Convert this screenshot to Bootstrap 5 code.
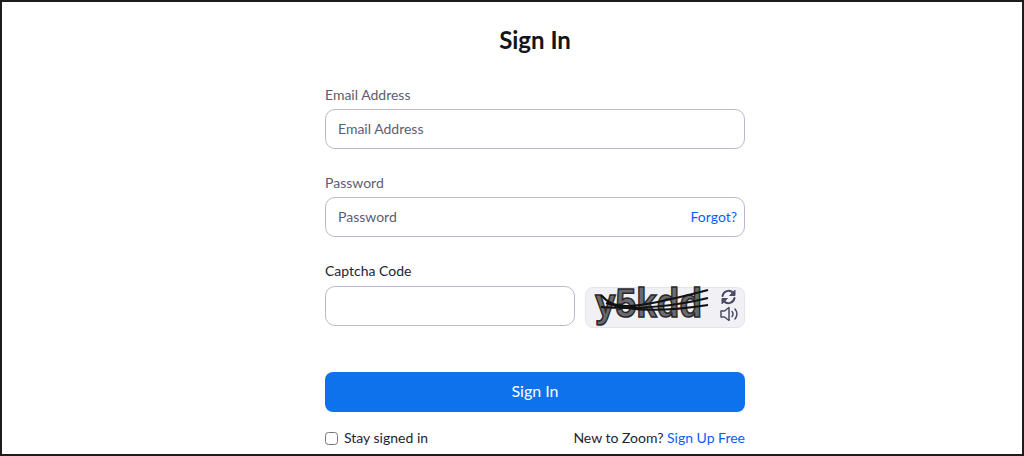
<!DOCTYPE html>
<html lang="en">
<head>
<meta charset="utf-8">
<title>Sign In</title>
<link href="https://cdn.jsdelivr.net/npm/bootstrap@5.3.0/dist/css/bootstrap.min.css" rel="stylesheet">
<style>
html,body{height:100%;}
body{font-family:Lato,"Liberation Sans",sans-serif;background:#fff;color:#232333;overflow:hidden;}
.frame{height:456px;border:2px solid #1c1c1c;box-sizing:border-box;overflow:hidden;}
.signbox{width:420px;margin-left:323px;}
.ttl{font-size:24px;font-weight:700;line-height:32px;margin:22px 0 29px;color:#131619;text-align:center;}
.lbl{display:block;font-size:14px;line-height:20px;margin:0 0 4px;color:#5d5c75;}
.lbl.dark{color:#232333;margin-bottom:5px;}
.fld{height:40px;border:1px solid #bab9d1;border-radius:10px;font-size:14px;color:#4a4a65;padding:0 12px 2px;box-shadow:none;}
.fld::placeholder{color:#5d5c75;opacity:1;}
.fwrap{margin-bottom:24px;}
.forgot{top:0;right:0;height:38px;display:flex;align-items:center;padding-right:8px;font-size:14px;color:#0b5cff;text-decoration:none;}
.capbox{width:160px;height:41px;margin-top:1px;background:#f1f1f5;border:1px solid #e4e4ed;border-radius:8px;margin-left:10px;flex:none;}
.capbox svg{overflow:visible;display:block;}
.go{height:40px;margin-top:44px;background:#0e72ed;border:none;border-radius:8px;font-size:16px;color:#fff;padding:0 0 2px;}
.go:hover{background:#0e72ed;color:#fff;}
.foot{font-size:14px;line-height:20px;margin-top:16px;}
.foot a{color:#0b5cff;text-decoration:none;}
.foot label{margin:0;}
.chk{width:13px;height:13px;border:1px solid #767676;border-radius:2px;margin:0 6px 0 0;box-shadow:none;}
</style>
</head>
<body class="m-0">
<div class="frame">
  <div class="signbox">
    <h1 class="ttl">Sign In</h1>
    <div class="fwrap">
      <label class="lbl" for="em">Email Address</label>
      <input id="em" class="form-control fld" type="text" placeholder="Email Address">
    </div>
    <div class="fwrap">
      <label class="lbl" for="pw">Password</label>
      <div class="position-relative">
        <input id="pw" class="form-control fld" type="text" placeholder="Password">
        <a class="forgot position-absolute" href="#">Forgot?</a>
      </div>
    </div>
    <label class="lbl dark" for="cc">Captcha Code</label>
    <div class="d-flex align-items-start">
      <input id="cc" class="form-control fld" type="text">
      <div class="capbox">
        <svg width="158" height="39" viewBox="0 0 158 39" aria-label="captcha">
          <text x="9" y="29" font-family="Liberation Sans" font-weight="700" font-size="40" textLength="107" lengthAdjust="spacingAndGlyphs" fill="#6a6a70" stroke="#29292c" stroke-width="1.500">y5kdd</text>
          <path d="M15 7C28 22 42 23 122 2M15 19C50 22 90 18 122 10M20 15C50 26 90 22 122 17" fill="none" stroke="#111" stroke-width="2"/>
          <g fill="none" stroke="#4a4a65" stroke-width="2" stroke-linecap="round" stroke-linejoin="round">
            <path d="M136.500 8a6.200 6.200 0 0 1 10.500-3.300"/>
            <path d="M148.500 10a6.200 6.200 0 0 1-10.500 3.300"/>
            <path d="M149 2.500v5h-5z" fill="#4a4a65" stroke-width="1"/>
            <path d="M136 15.500v-5h5z" fill="#4a4a65" stroke-width="1"/>
          </g>
          <g fill="none" stroke="#4a4a65" stroke-width="1.500" stroke-linecap="round" stroke-linejoin="round">
            <path d="M135 23h3.500l4.500-3.500v13l-4.500-3.500h-3.500z"/>
            <path d="M146 23.500a3.500 3.500 0 0 1 0 5M149 21a7.500 7.500 0 0 1 0 10"/>
          </g>
        </svg>
      </div>
    </div>
    <button class="btn go w-100 d-block" type="button">Sign In</button>
    <div class="foot d-flex justify-content-between align-items-center">
      <label class="d-flex align-items-center"><input class="form-check-input chk" type="checkbox">Stay signed in</label>
      <span>New to Zoom? <a href="#">Sign Up Free</a></span>
    </div>
  </div>
</div>
</body>
</html>
